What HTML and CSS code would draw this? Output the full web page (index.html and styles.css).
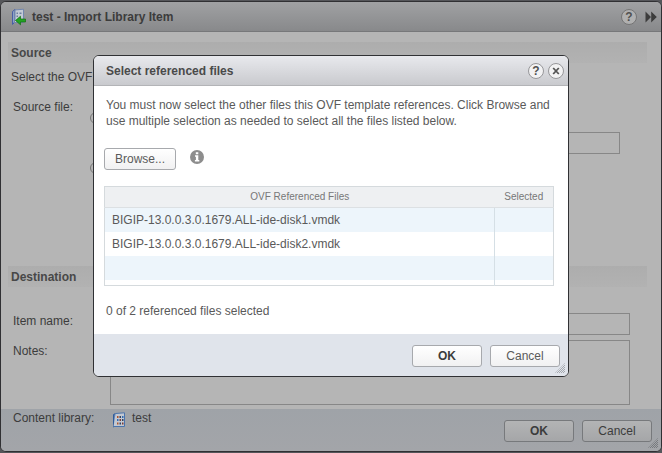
FILE: index.html
```html
<!DOCTYPE html>
<html lang="en">
<head>
<meta charset="utf-8">
<title>Import Library Item</title>
<link rel="stylesheet" href="styles.css">
</head>
<body>
<main class="window">
  <header class="titlebar">
    <svg class="title-icon" width="16" height="18" viewBox="0 0 16 18" aria-hidden="true">
      <path d="M1.500 3.500 L4 1.500 V14 L1.500 16.500 Z" fill="#8fa3c4" stroke="#4a5fa5"/>
      <path d="M4 2 L12.500 1.200 V14.500 H2.500 L4 13 Z" fill="#c3cad5" stroke="#7287ad"/>
      <path d="M5.500 4.500h1.500v1.500h-1.500z M8.500 4.500h2v1.500h-2z M5.500 7.500h1.500v1.500h-1.500z" fill="#6d7f9f"/>
      <path d="M4.500 12.500 L9.500 8.200 V11 H14.500 V14 H9.500 V16.800 Z" fill="#23a323" stroke="#11700f" stroke-width=".7"/>
    </svg>
    <h1 class="title">test - Import Library Item</h1>
    <button class="round" type="button" aria-label="Help">?</button>
    <button class="expand" type="button" aria-label="Collapse">
      <svg width="12" height="12" viewBox="0 0 12 12" aria-hidden="true"><path d="M.500 .5 L6 6 L.500 11.500 Z M6.200 .5 L11.800 6 L6.200 11.500 Z" fill="#3c3c3c"/></svg>
    </button>
  </header>
  <form class="content">
    <section class="source">
      <h2 class="section">Source</h2>
      <p class="intro">Select the OVF</p>
      <div class="row">
        <span class="label">Source file:</span>
        <div class="choices">
          <input class="radio" type="radio" name="source" aria-label="URL">
          <input class="box url" type="text" aria-label="Source URL">
          <input class="radio" type="radio" name="source" aria-label="Local file">
        </div>
      </div>
    </section>
    <section class="destination">
      <h2 class="section">Destination</h2>
      <div class="row name-row">
        <label class="label" for="name">Item name:</label>
        <input class="box" id="name" type="text">
      </div>
      <div class="row">
        <label class="label notes-label" for="notes">Notes:</label>
        <textarea class="box notes" id="notes"></textarea>
      </div>
    </section>
  </form>
  <footer class="footer">
    <div class="library">
      <span class="label">Content library:</span>
      <svg width="14" height="16" viewBox="0 0 14 16" aria-hidden="true">
        <path d="M1.500 2.500 L3.500 1.500 V13.500 L1.500 15 Z" fill="#5e7fb0" stroke="#2f5c9b"/>
        <path d="M3.500 1.500 L12.500 .8 V14.500 H1.500" fill="#c3c9d2" stroke="#4a74ad"/>
        <path d="M5 4h1.500v2H5z M5 10.500h1.500v2H5z" fill="#b0552d"/><path d="M7.500 4h1.500v2H7.500z M10 7h1.500v2H10z M7.500 10.500h1.500v2H7.500z" fill="#33435f"/>
        <path d="M10 4h1.500v2H10z M5 7h1.500v2H5z" fill="#316db5"/><path d="M7.500 7h1.500v2H7.500z M10 10.500h1.500v2H10z" fill="#7d3d36"/>
      </svg>
      <span>test</span>
    </div>
    <div class="actions">
      <button class="btn primary" type="button">OK</button>
      <button class="btn" type="button">Cancel</button>
    </div>
    <span class="grip"></span>
  </footer>
</main>
<div class="overlay">
  <div class="dialog" role="dialog" aria-labelledby="dialog-title">
    <header class="titlebar">
      <h2 class="title" id="dialog-title">Select referenced files</h2>
      <button class="round" type="button" aria-label="Help">?</button>
      <button class="round" type="button" aria-label="Close"><svg width="8" height="8" viewBox="0 0 8 8" aria-hidden="true"><path d="M1.200 1 L6.800 7 M6.800 1 L1.200 7" stroke="#555" stroke-width="1.800"/></svg></button>
    </header>
    <div class="dialog-body">
      <p class="message">You must now select the other files this OVF template references. Click Browse and use multiple selection as needed to select all the files listed below.</p>
      <div class="browse">
        <button class="btn" type="button">Browse...</button>
        <svg width="14" height="14" viewBox="0 0 14 14" role="img" aria-label="Information"><circle cx="7" cy="7" r="7" fill="#8d8d8d"/><path d="M5.800 2.200h2.500v2H5.800z M5 5.300h3.300v4.700h1v1.500H4.900V10h1V6.800H5z" fill="#fff"/></svg>
      </div>
      <table class="files">
        <thead><tr><th>OVF Referenced Files</th><th class="selected">Selected</th></tr></thead>
        <tbody>
          <tr><td>BIGIP-13.0.0.3.0.1679.ALL-ide-disk1.vmdk</td><td></td></tr>
          <tr><td>BIGIP-13.0.0.3.0.1679.ALL-ide-disk2.vmdk</td><td></td></tr>
          <tr><td></td><td></td></tr>
          <tr class="rest"><td></td><td></td></tr>
        </tbody>
      </table>
      <p class="count">0 of 2 referenced files selected</p>
    </div>
    <footer class="footer">
      <div class="actions">
        <button class="btn primary" type="button">OK</button>
        <button class="btn" type="button">Cancel</button>
      </div>
      <span class="grip"></span>
    </footer>
  </div>
</div>
</body>
</html>
```
FILE: styles.css
```css
* { box-sizing: border-box; }
body {
  margin: 0;
  min-height: 100vh;
  display: flex;
  background: #55565a;
  color: #3c3c3c;
  font: 12px/16px "Liberation Sans", Arial, sans-serif;
}
h1, h2, p { margin: 0; font-size: 12px; }
button, input, textarea { font: inherit; color: inherit; margin: 0; }

.window {
  flex: 1;
  display: flex;
  flex-direction: column;
  margin: 1px 0;
  border: 1px solid #303033;
  border-radius: 6px;
  background: #b5b5b5;
  overflow: hidden;
}
.titlebar {
  display: flex;
  align-items: center;
  gap: 5px;
  height: 30px;
  padding: 0 4px 0 10px;
  background: linear-gradient(#a0a1a3, #88898b);
  border-bottom: 1px solid #77787a;
}
.title { flex: 1; font-weight: bold; }
.round {
  display: grid;
  place-items: center;
  width: 16px;
  height: 16px;
  padding: 0;
  border: 1px solid #757575;
  border-radius: 50%;
  background: #b0b0b0;
  color: #505050;
  font-weight: bold;
  line-height: 14px;
}
.expand { display: flex; padding: 0; margin-left: 3px; border: 0; background: none; }

.content { flex: 1; display: flex; flex-direction: column; padding: 10px 14px 4px 7px; }
.source { flex: 1; }
.section {
  height: 21px;
  padding: 0 3px;
  line-height: 22px;
  color: #484848;
  background: linear-gradient(#adadad, #b2b2b2);
}
.intro { padding: 6px 3px 0; }
.row { display: flex; padding: 0 17px 0 5px; }
.source .row { padding-top: 14px; padding-right: 27px; }
.label { width: 97px; flex: none; }
.box {
  width: 100%;
  height: 22px;
  padding: 2px 4px;
  border: 1px solid #878787;
  border-radius: 0;
  background: #b5b5b5;
}
.choices { flex: 1; display: flex; flex-direction: column; gap: 8px; padding-top: 13px; margin-left: -20px; }
.radio { appearance: none; width: 12px; height: 12px; border: 1px solid #777; border-radius: 50%; }
.url { margin-left: 20px; width: auto; }
.name-row { padding-top: 26px; padding-bottom: 5px; }
.notes { display: block; height: 65px; resize: none; }
.notes-label { padding-top: 3px; }

.footer {
  position: relative;
  display: flex;
  justify-content: flex-end;
  min-height: 42px;
  padding: 11px 9px 9px 12px;
  background: linear-gradient(#9fa3a8, #a3a5a9);
}
.library { display: flex; flex: 1; align-self: flex-start; margin-top: -10px; gap: 2px; }
.library svg { margin: 2px 4px 0 0; }
.actions { display: flex; gap: 8px; }
.btn {
  width: 70px;
  height: 22px;
  padding: 0;
  border: 1px solid #77797c;
  border-radius: 3px;
  background: linear-gradient(#b3b4b5, #a5a6a8);
}
.primary { font-weight: bold; }
.grip {
  position: absolute;
  right: 3px;
  bottom: 3px;
  width: 10px;
  height: 10px;
  background: repeating-conic-gradient(#777a7e 0 25%, transparent 0 50%) 0 0 / 2px 2px;
  clip-path: polygon(100% 0, 100% 100%, 0 100%);
}

.overlay { position: absolute; inset: 0; padding: 55px 93px; }
.dialog {
  border: 1px solid #303134;
  border-radius: 6px;
  background: #fff;
  color: #5a5a5a;
  overflow: hidden;
}
.dialog .titlebar { gap: 4px; padding: 0 4px 0 12px; background: linear-gradient(#e8e9ed, #c9cace); border-color: #b3b4b7; }
.dialog .title { color: #4a4a4a; }
.dialog .round { border-color: #97979a; background: #f2f2f3; }
.dialog-body { padding: 11px 14px 0 10px; }
.message { padding: 0 0 0 2px; }
.browse { display: flex; align-items: center; gap: 14px; padding: 19px 0 16px; }
.browse .btn { width: 72px; }
.browse svg { margin-bottom: 5px; }
.dialog .btn { border-color: #a7a9ad; background: linear-gradient(#fff, #f1f1f2); }
.dialog .primary { color: #3c3c3c; }
.files { width: 100%; border-collapse: collapse; border: 1px solid #d5dadd; table-layout: fixed; }
.files th {
  height: 21px;
  padding: 0;
  background: #eef0f2;
  border-bottom: 1px solid #dce0e3;
  font-size: 10px;
  font-weight: normal;
  color: #777;
}
.files .selected { width: 59px; }
.files td { height: 24px; padding: 0 7px; }
.files td + td { border-left: 1px solid #d5dfe5; }
.files tbody tr:nth-child(odd) { background: #edf5fb; }
.files .rest td { height: 6px; }
.files tbody .rest { background: #fff; }
.count { padding: 17px 2px 15px; }
.dialog .footer { background: #e0e4eb; padding-right: 8px; }
.dialog .grip { background-image: repeating-conic-gradient(#a5a9af 0 25%, transparent 0 50%); }
```
